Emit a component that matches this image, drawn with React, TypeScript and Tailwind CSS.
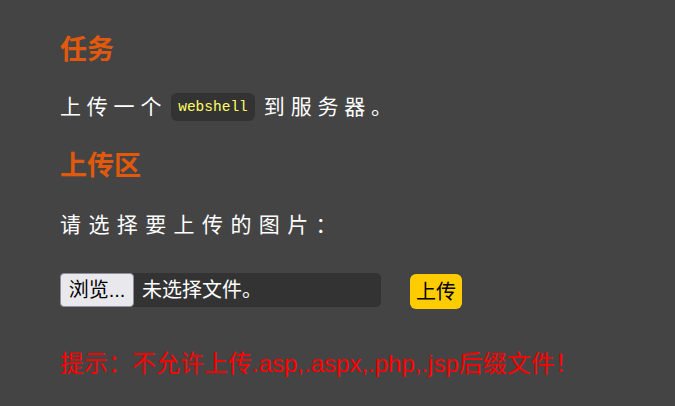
export default function App() {
  return (
    <div className="min-h-[406px] w-full bg-[#444444] pl-[60px] pt-[34px] font-['Liberation_Sans','Noto_Sans_CJK_SC',sans-serif] text-white">
      {/* 任务 */}
      <h2 className="text-[27px] leading-[32px] font-bold text-[#e2590c]">任务</h2>
      <p className="mt-[27px] flex items-center text-[21px] leading-[28px] tracking-[5.8px]">
        <span>上传一个</span>
        <code className="ml-[4px] mr-[9px] flex h-[28px] items-center rounded-md bg-[#333333] px-[7px] font-['Liberation_Mono',monospace] text-[14.5px] font-normal tracking-normal text-[#ffff66]">
          webshell
        </code>
        <span>到服务器。</span>
      </p>

      {/* 上传区 */}
      <h2 className="mt-[29px] text-[27px] leading-[32px] font-bold text-[#e2590c]">上传区</h2>
      <p className="mt-[29px] text-[21px] leading-[28px] tracking-[7.4px]">请选择要上传的图片：</p>

      <div className="mt-[34px] flex items-start">
        <div className="flex h-[34px] w-[321px] items-center rounded-[5px] bg-[#333333]">
          <div className="flex h-[34px] w-[74px] items-center justify-center rounded-[4px] border border-[#8f8f9d] bg-[#e9e9ed] text-[20px] text-black">
            浏览...
          </div>
          <span className="ml-[8px] text-[20px] text-white">未选择文件。</span>
        </div>
        <button className="ml-[29px] mt-[1px] flex h-[35px] w-[52px] items-center justify-center rounded-[6px] bg-[#ffcc00] text-[20px] text-black">
          上传
        </button>
      </div>

      <p className="mt-[39px] pb-[26px] text-[24px] leading-[32px] text-[#ff0000]">
        提示：不允许上传.asp,.aspx,.php,.jsp后缀文件！
      </p>
    </div>
  )
}
